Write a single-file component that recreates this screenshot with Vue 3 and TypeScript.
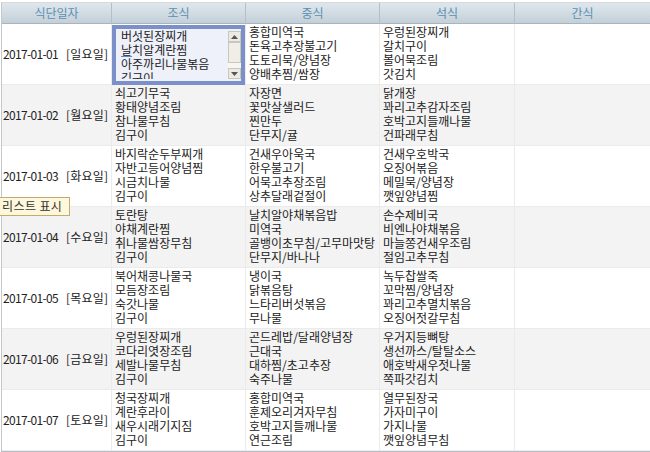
<script setup lang="ts">
interface Row {
  date: string;
  day: string;
  meals: string[][];
}

const rows: Row[] = [
  { date: '2017-01-01', day: '[일요일]', meals: [
    ['버섯된장찌개', '날치알계란찜', '아주까리나물볶음', '김구이'],
    ['홍합미역국', '돈육고추장불고기', '도토리묵/양념장', '양배추찜/쌈장'],
    ['우렁된장찌개', '갈치구이', '볼어묵조림', '갓김치'] ] },
  { date: '2017-01-02', day: '[월요일]', meals: [
    ['쇠고기무국', '황태양념조림', '참나물무침', '김구이'],
    ['자장면', '꽃맛살샐러드', '찐만두', '단무지/귤'],
    ['닭개장', '꽈리고추감자조림', '호박고지들깨나물', '건파래무침'] ] },
  { date: '2017-01-03', day: '[화요일]', meals: [
    ['바지락순두부찌개', '자반고등어양념찜', '시금치나물', '김구이'],
    ['건새우아욱국', '한우불고기', '어묵고추장조림', '상추달래겉절이'],
    ['건새우호박국', '오징어볶음', '메밀묵/양념장', '깻잎양념찜'] ] },
  { date: '2017-01-04', day: '[수요일]', meals: [
    ['토란탕', '야채계란찜', '취나물쌈장무침', '김구이'],
    ['날치알야채볶음밥', '미역국', '골뱅이초무침/고무마맛탕', '단무지/바나나'],
    ['손수제비국', '비엔나야채볶음', '마늘쫑건새우조림', '절임고추무침'] ] },
  { date: '2017-01-05', day: '[목요일]', meals: [
    ['북어채콩나물국', '모듬장조림', '숙갓나물', '김구이'],
    ['냉이국', '닭볶음탕', '느타리버섯볶음', '무나물'],
    ['녹두찹쌀죽', '꼬막찜/양념장', '꽈리고추멸치볶음', '오징어젓갈무침'] ] },
  { date: '2017-01-06', day: '[금요일]', meals: [
    ['우렁된장찌개', '코다리엿장조림', '세발나물무침', '김구이'],
    ['곤드레밥/달래양념장', '근대국', '대하찜/초고추장', '숙주나물'],
    ['우거지등뼈탕', '생선까스/탈탈소스', '애호박새우젓나물', '쪽파갓김치'] ] },
  { date: '2017-01-07', day: '[토요일]', meals: [
    ['청국장찌개', '계란후라이', '새우시래기지짐', '김구이'],
    ['홍합미역국', '훈제오리겨자무침', '호박고지들깨나물', '연근조림'],
    ['열무된장국', '가자미구이', '가지나물', '깻잎양념무침'] ] },
];

const heads: string[] = ['식단일자', '조식', '중식', '석식', '간식'];
</script>

<template>
  <div class="page">
    <table class="menu">
      <colgroup>
        <col class="c-date" />
        <col class="c-meal" />
        <col class="c-meal" />
        <col class="c-meal-w" />
        <col />
      </colgroup>
      <thead>
        <tr>
          <th v-for="h in heads" :key="h">{{ h }}</th>
        </tr>
      </thead>
      <tbody>
        <tr v-for="(row, r) in rows" :key="row.date" :class="{ alt: r % 2 === 1 }">
          <td class="date"><span class="ymd">{{ row.date }}</span><span class="day">{{ row.day }}</span></td>
          <td v-for="(meal, m) in row.meals" :key="m" :class="{ editing: r === 0 && m === 0 }">
            <div v-if="r === 0 && m === 0" class="editor">
              <div class="editor-text">
                <div v-for="(item, i) in meal" :key="item"><span :class="{ typo: i === 1 }">{{ item.charAt(0) }}</span>{{ item.slice(1) }}</div>
              </div>
              <div class="scrollbar">
                <div class="sb-btn">
                  <svg width="7" height="4" viewBox="0 0 7 4"><path d="M3.5 0 7 4H0z" fill="#555" /></svg>
                </div>
                <div class="sb-thumb"></div>
                <div class="sb-track"></div>
                <div class="sb-btn">
                  <svg width="7" height="4" viewBox="0 0 7 4"><path d="M0 0h7L3.5 4z" fill="#555" /></svg>
                </div>
              </div>
            </div>
            <template v-else>
              <div v-for="item in meal" :key="item">{{ item }}</div>
            </template>
          </td>
          <td></td>
        </tr>
      </tbody>
    </table>
    <div class="tip">리스트 표시</div>
  </div>
</template>

<style>
html, body {
  margin: 0;
  background: #fff;
}
</style>

<style scoped>
.page {
  position: relative;
  width: 650px;
  height: 452px;
  overflow: hidden;
  padding: 2px 0 0 1px;
  box-sizing: border-box;
  font-family: "Noto Sans CJK KR", "Liberation Sans", sans-serif;
  font-size: 12px;
  line-height: 14px;
  color: #222;
}
.menu {
  width: 649px;
  table-layout: fixed;
  border-collapse: separate;
  border-spacing: 0;
  border-top: 1px solid #d6dadd;
  border-left: 1px solid #c2c8cc;
  border-bottom: 1px solid #b9c0c5;
}
.c-date { width: 109px; }
.c-meal { width: 134px; }
.c-meal-w { width: 135px; }
th {
  box-sizing: border-box;
  height: 21px;
  padding: 0;
  font-weight: 400;
  font-size: 12px;
  line-height: 20px;
  color: #5b8fb3;
  background: linear-gradient(#dfe7ec, #c3d0d9);
  border-bottom: 1px solid #a9b4bb;
  text-align: center;
}
th + th {
  border-left: 1px solid #b4bfc6;
}
td {
  box-sizing: border-box;
  height: 61px;
  padding: 1px 0 3px 3px;
  vertical-align: top;
  white-space: nowrap;
  border-bottom: 1px solid #ebebeb;
}
td + td {
  border-left: 1px solid #ebebeb;
}
.alt td { background: #f3f3f3; }
td.date {
  padding: 0 0 0 1px;
  vertical-align: middle;
}
.ymd {
  display: inline-block;
  width: 63px;
  letter-spacing: -0.65px;
}
.day {
  letter-spacing: 0.2px;
}
td.editing {
  padding: 1px 0 0;
  border-bottom: 0;
}
.editor {
  display: flex;
  box-sizing: border-box;
  height: 60px;
  background: #eef0fa;
  border: 4px solid #7b8fc9;
  overflow: hidden;
}
.editor-text {
  flex: 1;
  padding: 0 0 0 5px;
  height: 50px;
  overflow: hidden;
}
.typo {
  text-decoration: underline;
  text-decoration-color: #4a90d9;
  text-underline-offset: 1px;
}
.scrollbar {
  display: flex;
  flex-direction: column;
  width: 13px;
  margin: 2px 0;
}
.sb-btn {
  display: flex;
  align-items: center;
  justify-content: center;
  height: 11px;
  flex: none;
  background: #eceae2;
  border: 1px solid #c9c7bc;
  box-sizing: border-box;
}
.sb-thumb {
  height: 21px;
  background: #f0eee6;
  border: 1px solid #c9c7bc;
  box-sizing: border-box;
}
.sb-track {
  flex: 1;
  background: #f7f6f1;
}
.tip {
  position: absolute;
  left: -6px;
  top: 197px;
  padding: 1px 7px 2px;
  font-size: 12px;
  line-height: 14px;
  letter-spacing: 0.4px;
  color: #333;
  background: #fdf8dc;
  border: 1px solid #c2ab70;
}
</style>
